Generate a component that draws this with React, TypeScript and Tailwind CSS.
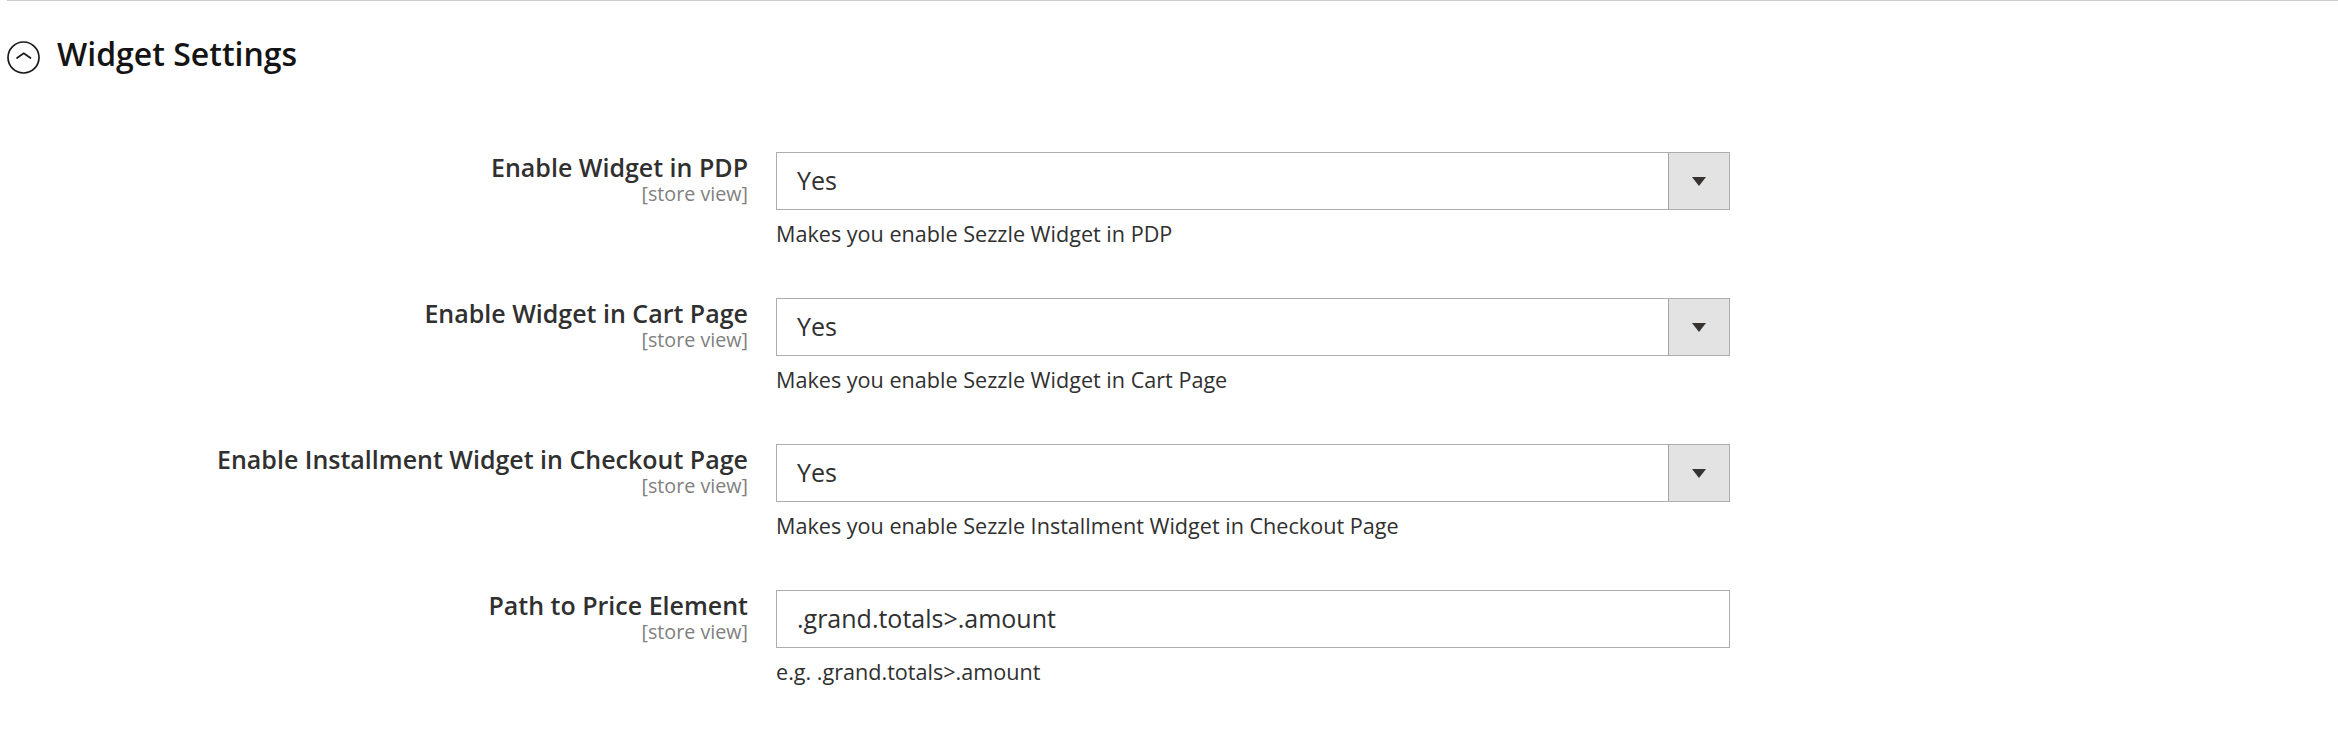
import React from "react";

type Field = {
  label: string;
  scope: string;
  kind: "select" | "text";
  value: string;
  note: string;
};

const fields: Field[] = [
  {
    label: "Enable Widget in PDP",
    scope: "[store view]",
    kind: "select",
    value: "Yes",
    note: "Makes you enable Sezzle Widget in PDP",
  },
  {
    label: "Enable Widget in Cart Page",
    scope: "[store view]",
    kind: "select",
    value: "Yes",
    note: "Makes you enable Sezzle Widget in Cart Page",
  },
  {
    label: "Enable Installment Widget in Checkout Page",
    scope: "[store view]",
    kind: "select",
    value: "Yes",
    note: "Makes you enable Sezzle Installment Widget in Checkout Page",
  },
  {
    label: "Path to Price Element",
    scope: "[store view]",
    kind: "text",
    value: ".grand.totals>.amount",
    note: "e.g. .grand.totals>.amount",
  },
];

function CollapseIcon() {
  return (
    <svg width="33" height="33" viewBox="0 0 33 33" fill="none" className="shrink-0 mt-[8px]">
      <circle cx="16.5" cy="16.5" r="15.5" stroke="#1a1a1a" strokeWidth="1.7" />
      <path d="M10 17 L16.7 12.3 L23.5 17" stroke="#1a1a1a" strokeWidth="1.7" strokeLinecap="round" strokeLinejoin="round" />
    </svg>
  );
}

function SelectBox({ value }: { value: string }) {
  return (
    <div className="flex h-[58px] w-[954px] border border-[#adadad] bg-white">
      <span className="flex-1 flex items-center pl-[20px] text-[25px] text-[#303030]">{value}</span>
      <span className="w-[61px] flex items-center justify-center bg-[#e3e3e3] border-l border-[#a4a4a4]">
        <svg width="14" height="9" viewBox="0 0 14 9">
          <polygon points="0,0 14,0 7,9" fill="#373330" />
        </svg>
      </span>
    </div>
  );
}

function TextBox({ value }: { value: string }) {
  return (
    <div className="flex items-center h-[58px] w-[954px] border border-[#adadad] bg-white pl-[20px] text-[25px] text-[#303030]">
      {value}
    </div>
  );
}

export default function App() {
  return (
    <div className="min-h-screen bg-white font-['Open_Sans',sans-serif]">
      <section className="ml-[7px] border-t border-[#cccccc]">
        {/* Section title */}
        <div className="flex items-start gap-[17px] pt-[32px]">
          <CollapseIcon />
          <h2 className="text-[32px] leading-[42px] font-semibold text-[#141414]">Widget Settings</h2>
        </div>

        {/* Rows */}
        <div className="mt-[77px] flex flex-col gap-[49px]">
          {fields.map((f) => (
            <div key={f.label} className="flex">
              <div className="w-[741px] shrink-0 text-right">
                <p className="text-[25px] leading-[30px] font-semibold text-[#303030]">{f.label}</p>
                <p className="text-[19.7px] leading-[24px] text-[#808080]">{f.scope}</p>
              </div>
              <div className="ml-[28px]">
                {f.kind === "select" ? <SelectBox value={f.value} /> : <TextBox value={f.value} />}
                <p className="mt-[9px] text-[21.6px] leading-[30px] text-[#303030]">{f.note}</p>
              </div>
            </div>
          ))}
        </div>
      </section>
    </div>
  );
}
